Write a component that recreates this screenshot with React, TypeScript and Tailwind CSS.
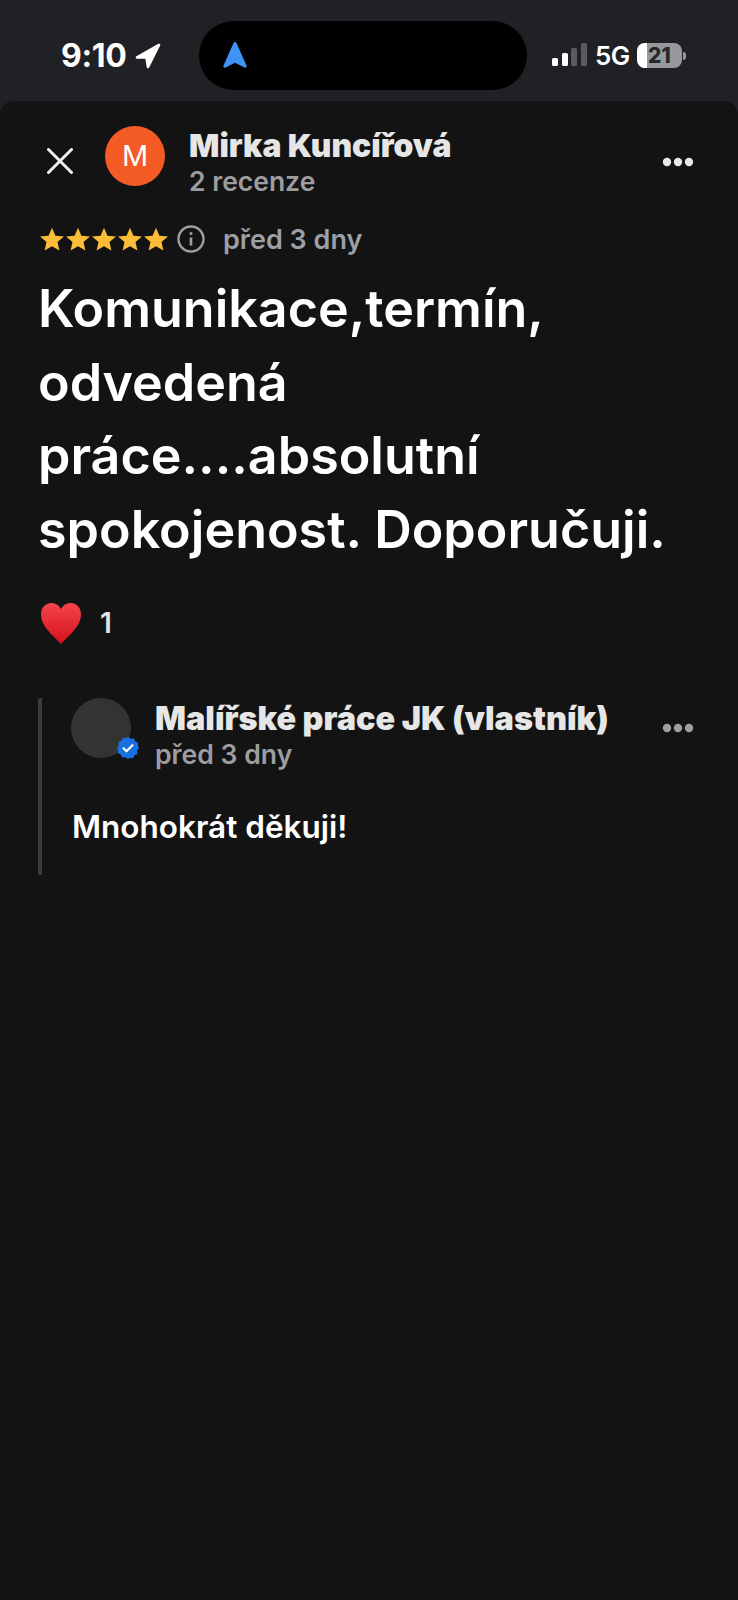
import React from "react";

const Star = () => (
  <svg width="26" height="25" viewBox="0 0 24 24">
    <path d="M12 .8l3.300 7.500 8.200.8-6.200 5.400 1.800 8.100L12 18.400l-7.100 4.200 1.800-8.100L.5 9.100l8.200-.8z" fill="#fbbc38" />
  </svg>
);

const Dots = ({ color }: { color: string }) => (
  <svg width="32" height="10" viewBox="0 0 32 10" fill={color}>
    <circle cx="5" cy="5" r="4.200" />
    <circle cx="16" cy="5" r="4.200" />
    <circle cx="27" cy="5" r="4.200" />
  </svg>
);

export default function App() {
  const sans = "font-['Inter','Liberation_Sans',sans-serif]";
  return (
    <div className={`w-[738px] h-[1600px] bg-[#202125] flex flex-col overflow-hidden ${sans}`}>
      {/* status bar */}
      <div className="h-[101px] shrink-0 flex items-start pt-[21px]">
        <div className="w-[199px] h-[69px] flex items-center pl-[61px]">
          <span className="text-[32px] font-bold text-white leading-none tracking-[-0.3px] w-[74px]">9:10</span>
          <svg width="26" height="26" viewBox="0 0 26 26" fill="white" stroke="white" strokeWidth="2.600" strokeLinejoin="round">
            <path d="M2 14.500 24 2 13 24 11.500 14.500z" />
          </svg>
        </div>
        <div className="w-[328px] h-[69px] bg-black rounded-[35px] flex items-center pl-[24px]">
          <svg width="24" height="27" viewBox="0 0 24 27" fill="#3f93f5">
            <path d="M12 0c.7 0 1.200.4 1.500 1.100l10 22.500c.6 1.400-.8 2.700-2.100 2L12.500 21c-.3-.2-.7-.2-1 0l-8.900 4.600c-1.300.7-2.700-.6-2.100-2l10-22.500C10.800.4 11.300 0 12 0z" />
          </svg>
        </div>
        <div className="flex-1 h-[69px] flex items-center pl-[25px]">
          <svg width="35" height="23" viewBox="0 0 35 23" className="mt-[-2px]">
            <rect x="0" y="15" width="6" height="8" rx="1.500" fill="white" />
            <rect x="10" y="10" width="6" height="13" rx="1.500" fill="white" />
            <rect x="19" y="5" width="6" height="18" rx="1.500" fill="#5b5c60" />
            <rect x="29" y="0" width="6" height="23" rx="1.500" fill="#5b5c60" />
          </svg>
          <span className="ml-[8px] text-[26px] font-semibold text-white leading-none tracking-[-0.5px]">5G</span>
          <div className="ml-[7px] relative w-[45px] h-[25px] rounded-[8px] bg-[#97989a] overflow-hidden flex items-center justify-center">
            <div className="absolute left-0 top-0 bottom-0 w-[10px] bg-white" />
            <span className="relative text-[21px] font-extrabold text-[#26272b] leading-none">21</span>
          </div>
          <div className="ml-[1px] w-[3px] h-[8px] rounded-r-full bg-[#97989a]" />
        </div>
      </div>

      {/* panel */}
      <div className="flex-1 bg-[#131314] rounded-t-[14px]">
        {/* header */}
        <div className="flex items-start pt-[25px] pr-[44px]">
          <div className="w-[105px] h-[60px] flex items-center pl-[47px] shrink-0">
            <svg width="26" height="26" viewBox="0 0 26 26" stroke="#f1f1f1" strokeWidth="3" strokeLinecap="round" className="mt-[10px]">
              <path d="M1.500 1.500 24.500 24.500M24.500 1.500 1.500 24.500" />
            </svg>
          </div>
          <div className="w-[60px] h-[60px] rounded-full bg-[#f45a24] text-white text-[29px] flex items-center justify-center shrink-0">M</div>
          <div className="ml-[24px] flex-1 mt-[2px]">
            <div className="text-[31.800px] leading-[36px] font-black text-[#e6e6e6] whitespace-nowrap">Mirka Kuncířová</div>
            <div className="text-[26.500px] leading-[34px] font-semibold text-[#9c9d9f]">2 recenze</div>
          </div>
          <div className="mt-[31px]"><Dots color="#e8e8e8" /></div>
        </div>

        {/* rating */}
        <div className="flex items-center mt-[23px] pl-[39px] h-[36px]">
          <div className="flex"><Star /><Star /><Star /><Star /><Star /></div>
          <svg width="28" height="28" viewBox="0 0 28 28" className="ml-[8px]" fill="none" stroke="#9aa0a6" strokeWidth="2.400">
            <circle cx="14" cy="14" r="12.500" />
            <path d="M14 12.500v8" strokeWidth="2.600" />
            <circle cx="14" cy="8.500" r="1.600" fill="#9aa0a6" stroke="none" />
          </svg>
          <span className="ml-[18px] text-[27px] font-semibold text-[#9aa0a6] leading-none">před 3 dny</span>
        </div>

        {/* review */}
        <div className="pl-[38px] pr-[30px] mt-[15px] text-[52px] leading-[73.500px] font-semibold text-white whitespace-nowrap">
          Komunikace,termín,<br />odvedená<br />práce....absolutní<br />spokojenost. Doporučuji.
        </div>

        {/* reaction */}
        <div className="flex items-center pl-[40px] mt-[36px] h-[42px]">
          <svg width="42" height="42" viewBox="0 0 42 42">
            <defs>
              <linearGradient id="h" x1="0" y1="0" x2="0" y2="1">
                <stop offset="0" stopColor="#f5454a" />
                <stop offset="1" stopColor="#d3101c" />
              </linearGradient>
            </defs>
            <path d="M21 42C15 35 1 25 1 12.500 1 5 6 1 11.500 1 15.500 1 19 3 21 7 23 3 26.500 1 30.500 1 36 1 41 5 41 12.500 41 25 27 35 21 42z" fill="url(#h)" />
          </svg>
          <span className="ml-[18px] text-[28px] font-semibold text-[#e3e3e3] leading-none">1</span>
        </div>

        {/* owner reply */}
        <div className="ml-[38px] mt-[54px] mr-[44px] border-l-4 border-[#3c3c3e] rounded-[2px] h-[177px] pl-[29px]">
          <div className="flex items-start">
            <div className="relative w-[60px] h-[60px] rounded-full bg-[#333334] shrink-0">
              <svg width="24" height="24" viewBox="0 0 24 24" className="absolute left-[45px] top-[38px]">
                <path d="M12 1l2.700 1.800 3.200-.2 1.400 2.900 2.900 1.400-.2 3.200L23 12l-1.800 2.700.2 3.200-2.900 1.400-1.400 2.900-3.200-.2L12 23l-2.700-1.800-3.200.2-1.400-2.900-2.900-1.400.2-3.200L1 12l1.800-2.700-.2-3.200 2.900-1.400 1.400-2.900 3.200.2z" fill="#1a6fe0" />
                <path d="M7.500 12.300l3 2.900 6-6" fill="none" stroke="white" strokeWidth="2.200" strokeLinecap="round" strokeLinejoin="round" />
              </svg>
            </div>
            <div className="ml-[24px] flex-1 mt-[3px]">
              <div className="text-[32.400px] leading-[36px] font-black text-[#e6e6e6] whitespace-nowrap">Malířské práce JK (vlastník)</div>
              <div className="text-[26.600px] leading-[34px] font-semibold text-[#9c9d9f]">před 3 dny</div>
            </div>
            <div className="mt-[25px]"><Dots color="#9aa0a6" /></div>
          </div>
          <div className="mt-[38px] pl-[1px] text-[31.500px] leading-[36px] font-semibold text-white">Mnohokrát děkuji!</div>
        </div>
      </div>
    </div>
  );
}
